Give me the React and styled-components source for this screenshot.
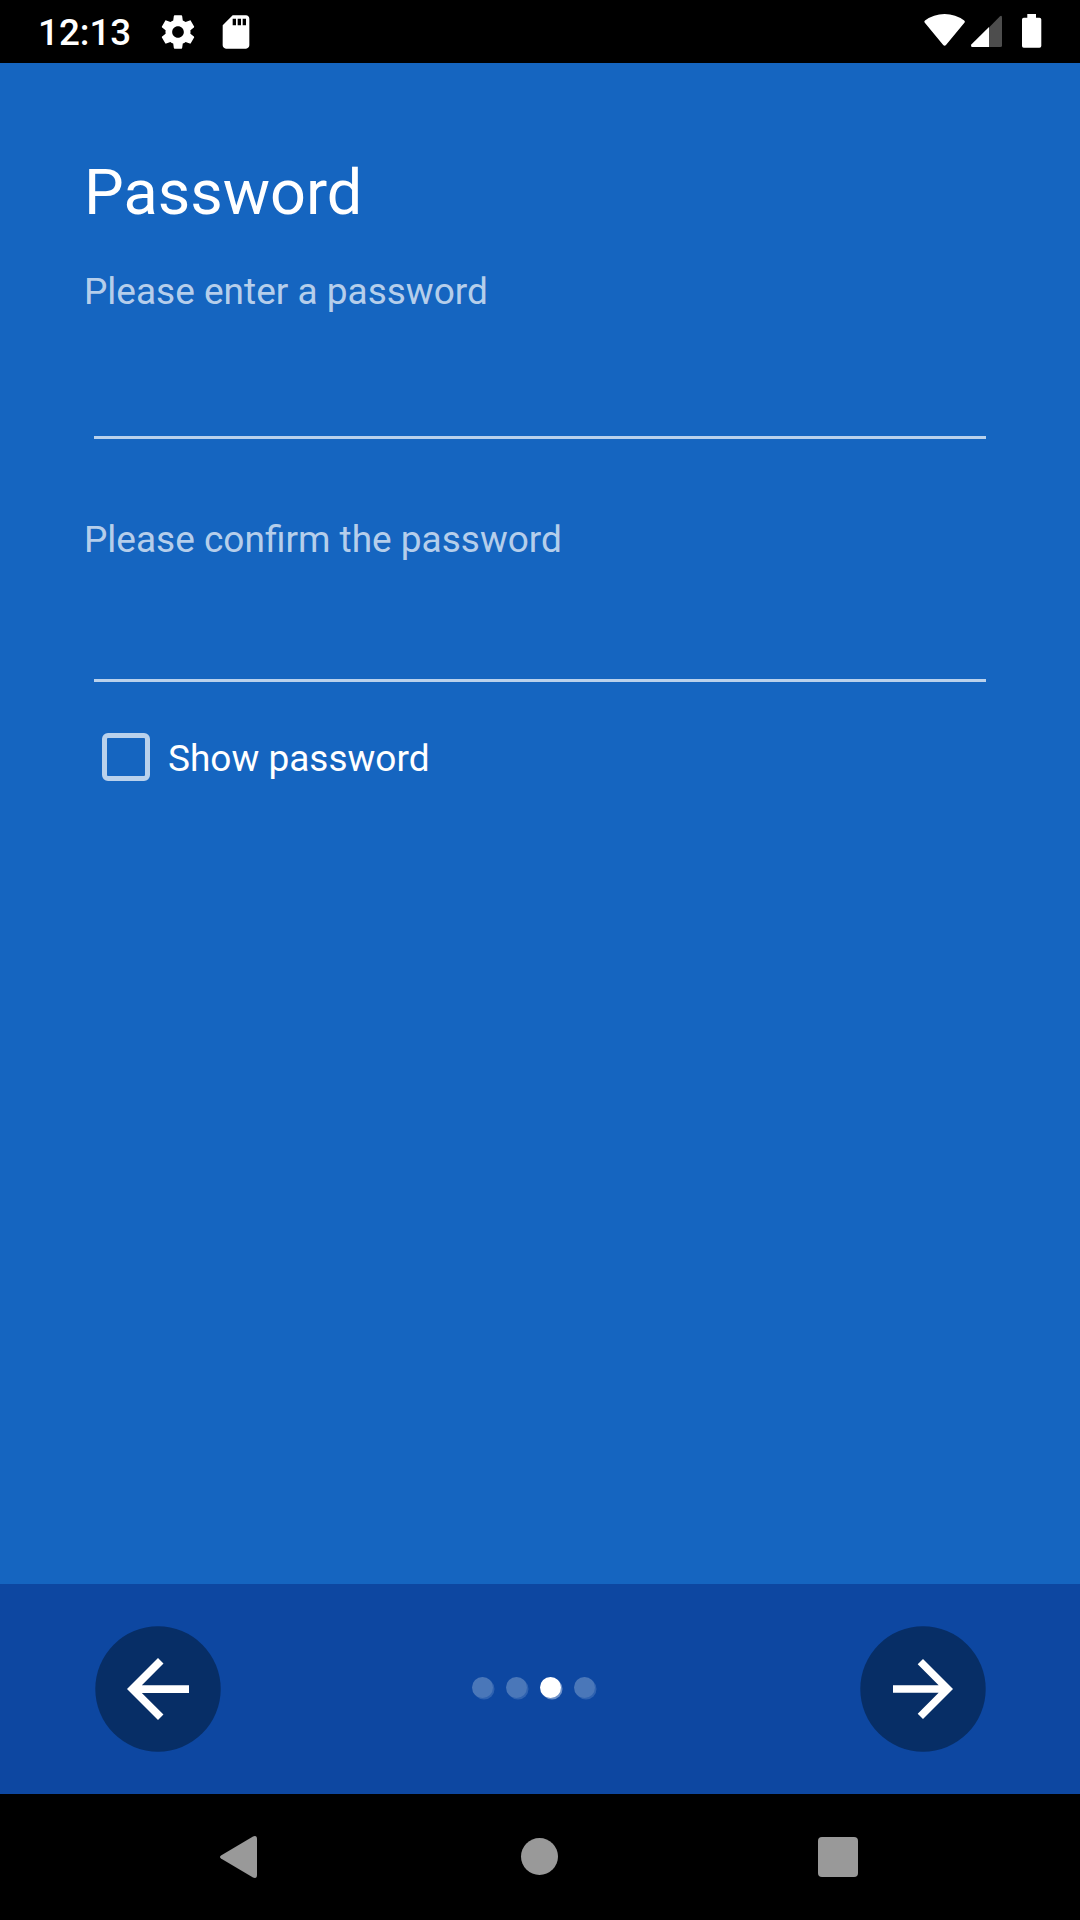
import React, { useState } from 'react';
import styled, { createGlobalStyle } from 'styled-components';

const GlobalStyle = createGlobalStyle`
  *, *::before, *::after { box-sizing: border-box; }
  body { margin: 0; background: #000; }
`;

const Screen = styled.div`
  display: flex;
  flex-direction: column;
  width: 1080px;
  height: 1920px;
  background: #1565c0;
  color: #fff;
  font-family: Roboto, sans-serif;
  overflow: hidden;
`;

const StatusBar = styled.header`
  display: flex;
  justify-content: space-between;
  height: 63px;
  padding: 0 38px;
  background: #000;
`;

const StatusGroup = styled.div`
  display: flex;
  align-items: center;
`;

const Clock = styled.span`
  width: 120px;
  font-size: 36.75px;
  font-weight: 500;
  line-height: 43px;
  padding-top: 2px;
`;

const NoticeIcon = styled.svg`
  width: 40px;
  height: 40px;
  margin-right: 18px;
  fill: #fff;
`;

const SystemIcons = styled.svg`
  width: 120px;
  height: 63px;
`;

const Content = styled.main`
  flex: 1;
  display: flex;
  flex-direction: column;
  padding: 93px 84px 0;
`;

const Title = styled.h1`
  margin: 0 0 24px;
  font-size: 63px;
  font-weight: 400;
  line-height: 74px;
`;

const Field = styled.label`
  display: flex;
  flex-direction: column;
  height: ${({ $height }) => $height}px;
  padding-top: ${({ $top }) => $top}px;
`;

const FieldLabel = styled.span`
  font-size: 37px;
  line-height: 44px;
  color: rgba(255, 255, 255, 0.7);
`;

const PasswordInput = styled.input`
  flex: 1;
  width: 892px;
  margin: 0 10px;
  padding: 0;
  border: 0;
  border-bottom: 3px solid rgba(255, 255, 255, 0.7);
  outline: 0;
  background: transparent;
  color: #fff;
  font: 400 47px Roboto, sans-serif;
`;

const CheckRow = styled.label`
  display: flex;
  align-items: center;
  margin-top: 51px;
  padding-left: 18px;
  height: 48px;
`;

const Checkbox = styled.input`
  appearance: none;
  width: 48px;
  height: 48px;
  margin: 0 18px 0 0;
  border: 5px solid rgba(255, 255, 255, 0.7);
  border-radius: 6px;
  background: ${({ checked }) => (checked ? 'rgba(255, 255, 255, 0.7)' : 'transparent')};
`;

const CheckText = styled.span`
  padding-top: 4px;
  font-size: 37px;
  line-height: 44px;
`;

const WizardBar = styled.footer`
  display: flex;
  align-items: center;
  justify-content: space-between;
  height: 210px;
  padding: 0 94px 0 95px;
  background: #0d47a1;
`;

const RoundButton = styled.button`
  display: flex;
  width: 126px;
  height: 126px;
  padding: 0;
  border: 0;
  background: transparent;
`;

const ButtonFace = styled.svg`
  width: 126px;
  height: 126px;
  fill: #fff;
`;

const Dots = styled.div`
  display: flex;
  gap: 13px;
  margin: 0 14px 3px 0;
`;

const Dot = styled.span`
  width: 21px;
  height: 21px;
  border-radius: 50%;
  background: ${({ $active }) => ($active ? '#fff' : '#4a77b9')};
  box-shadow: 1.5px 1.5px 0 ${({ $active }) => ($active ? '#6e91c8' : '#2f62b0')};
`;

const NavBar = styled.nav`
  display: flex;
  align-items: center;
  justify-content: space-between;
  height: 126px;
  padding: 0 222px 0 220px;
  background: #000;
`;

const NavIcon = styled.svg`
  width: ${({ $width }) => $width}px;
  height: 44px;
  fill: #999;
`;

const GEAR =
  'M19.43 12.98c.04-.32.07-.64.07-.98s-.03-.66-.07-.98l2.11-1.65c.19-.15.24-.42.12-.64l-2-3.46c-.12-.22-.39-.3-.61-.22l-2.49 1c-.52-.4-1.08-.73-1.69-.98l-.38-2.65C14.46 2.18 14.25 2 14 2h-4c-.25 0-.46.18-.49.42l-.38 2.65c-.61.25-1.17.59-1.69.98l-2.49-1c-.23-.09-.49 0-.61.22l-2 3.46c-.13.22-.07.49.12.64l2.11 1.65c-.04.32-.07.65-.07.98s.03.66.07.98l-2.11 1.65c-.19.15-.24.42-.12.64l2 3.46c.12.22.39.3.61.22l2.49-1c.52.4 1.08.73 1.69.98l.38 2.65c.03.24.24.42.49.42h4c.25 0 .46-.18.49-.42l.38-2.65c.61-.25 1.17-.59 1.69-.98l2.49 1c.23.09.49 0 .61-.22l2-3.46c.12-.22.07-.49-.12-.64l-2.11-1.65zM12 15.5c-1.93 0-3.5-1.57-3.5-3.5s1.57-3.5 3.5-3.5 3.5 1.57 3.5 3.5-1.57 3.5-3.5 3.5z';
const SD_CARD =
  'M18 2h-8L4.02 8 4 20c0 1.1.9 2 2 2h12c1.1 0 2-.9 2-2V4c0-1.1-.9-2-2-2zm-6 6h-2V4h2v4zm3 0h-2V4h2v4zm3 0h-2V4h2v4z';
const ARROW_BACK = 'M20 11H7.83l5.59-5.59L12 4l-8 8 8 8 1.41-1.41L7.83 13H20v-2z';
const ARROW_FORWARD = 'M12 4l-1.41 1.41L16.17 11H4v2h12.17l-5.58 5.59L12 20l8-8z';

function ArrowButton({ label, path, scale }) {
  return (
    <RoundButton aria-label={label}>
      <ButtonFace viewBox="0 0 126 126">
        <circle cx="63" cy="63" r="62.7" fill="#072e66" />
        <path d={path} transform={`translate(63 63) scale(${scale}) translate(-12 -12)`} />
      </ButtonFace>
    </RoundButton>
  );
}

export default function App() {
  const [visible, setVisible] = useState(false);
  const type = visible ? 'text' : 'password';
  return (
    <>
      <GlobalStyle />
      <Screen>
        <StatusBar>
          <StatusGroup>
            <Clock>12:13</Clock>
            <NoticeIcon viewBox="0 0 24 24"><path d={GEAR} /></NoticeIcon>
            <NoticeIcon viewBox="0 0 24 24"><path d={SD_CARD} /></NoticeIcon>
          </StatusGroup>
          <SystemIcons viewBox="922 0 120 63">
            <path fill="#fff" d="M924.6 22.6Q923.8 21.4 925 20.6Q933.5 14 944.6 14Q955.7 14 964.2 20.6Q965.4 21.4 964.6 22.6L946 45Q944.6 46.5 943.2 45Z" />
            <path fill="#4d4d4d" d="M989 27.5L1000 16.3Q1002 15 1002 17.5V45.5Q1002 47 1000.5 47H989Z" />
            <path fill="#fff" d="M989 27V47H972Q970.3 46.5 971.3 44.5Z" />
            <path fill="#fff" d="M1027.3 14H1036V17.7H1039.5Q1041.3 17.7 1041.3 19.5V46Q1041.3 47.8 1039.5 47.8H1023.8Q1022 47.8 1022 46V19.5Q1022 17.7 1023.8 17.7H1027.3Z" />
          </SystemIcons>
        </StatusBar>
        <Content>
          <Title>Password</Title>
          <Field $height={185} $top={16}>
            <FieldLabel>Please enter a password</FieldLabel>
            <PasswordInput type={type} />
          </Field>
          <Field $height={243} $top={79}>
            <FieldLabel>Please confirm the password</FieldLabel>
            <PasswordInput type={type} />
          </Field>
          <CheckRow>
            <Checkbox type="checkbox" checked={visible} onChange={(e) => setVisible(e.target.checked)} />
            <CheckText>Show password</CheckText>
          </CheckRow>
        </Content>
        <WizardBar>
          <ArrowButton label="Back" path={ARROW_BACK} scale={3.875} />
          <Dots>
            <Dot />
            <Dot />
            <Dot $active />
            <Dot />
          </Dots>
          <ArrowButton label="Next" path={ARROW_FORWARD} scale={3.75} />
        </WizardBar>
        <NavBar>
          <NavIcon $width={37} viewBox="0 0 37 44">
            <path d="M1 20.5L33 1.5Q37 0 37 4V40Q37 44 33 42.5L1 23.5Q-1 22 1 20.5Z" />
          </NavIcon>
          <NavIcon $width={41} viewBox="-4 0 41 44"><circle cx="18.5" cy="21.5" r="18.5" /></NavIcon>
          <NavIcon $width={40} viewBox="0 0 40 44"><rect y="2" width="40" height="40" rx="4" /></NavIcon>
        </NavBar>
      </Screen>
    </>
  );
}
